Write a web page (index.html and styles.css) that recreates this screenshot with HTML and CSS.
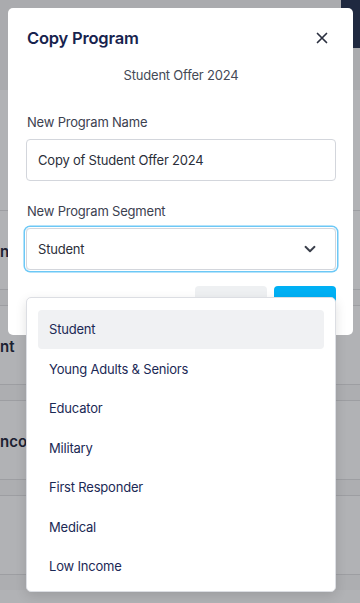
FILE: index.html
```html
<!DOCTYPE html>
<html lang="en">
<head>
    <meta charset="UTF-8">
    <meta name="viewport" content="width=device-width, initial-scale=1.0">
    <title>Copy Program</title>
    <link rel="stylesheet" href="styles.css">
</head>
<body>
    <!-- Dimmed page behind the modal -->
    <div class="page">
        <div class="page-top">
            <div class="page-top-accent"></div>
        </div>
        <div class="page-gap"></div>
        <div class="page-row"><span class="page-cell">n</span></div>
        <div class="page-band"></div>
        <div class="page-row"><span class="page-cell">nt</span></div>
        <div class="page-band"></div>
        <div class="page-row"><span class="page-cell">ncor</span></div>
        <div class="page-band"></div>
        <div class="page-row"></div>
        <div class="page-band"></div>
    </div>

    <!-- Modal -->
    <div class="modal">
        <div class="modal-header">
            <h2 class="modal-title">Copy Program</h2>
            <button class="modal-close" aria-label="Close">
                <svg width="12" height="12" viewBox="0 0 12 12" fill="none">
                    <path d="M1.5 1.5L10.5 10.5M10.5 1.5L1.5 10.5" stroke="#2b3040" stroke-width="1.7" stroke-linecap="round"/>
                </svg>
            </button>
        </div>
        <p class="modal-subtitle">Student Offer 2024</p>

        <label class="field-label">New Program Name</label>
        <div class="input">Copy of Student Offer 2024</div>

        <label class="field-label field-label-second">New Program Segment</label>
        <div class="select-wrap">
            <div class="select">
                <span>Student</span>
                <svg width="12" height="8" viewBox="0 0 12 8" fill="none">
                    <path d="M1.5 1.8L6 6.2L10.5 1.8" stroke="#3a3f4b" stroke-width="1.9" stroke-linecap="round" stroke-linejoin="round"/>
                </svg>
            </div>

            <ul class="dropdown">
                <li class="option active">Student</li>
                <li class="option">Young Adults &amp; Seniors</li>
                <li class="option">Educator</li>
                <li class="option">Military</li>
                <li class="option">First Responder</li>
                <li class="option">Medical</li>
                <li class="option">Low Income</li>
            </ul>
        </div>

        <div class="modal-actions">
            <button class="btn btn-cancel">Cancel</button>
            <button class="btn btn-save">Save</button>
        </div>
    </div>
</body>
</html>
```

FILE: styles.css
```css
/* Theme colors */
:root {
    --overlay: #b1b2b5;
    --overlay-dark: #aaabae;
    --overlay-line: #9d9ea2;
    --navy: #17234e;
    --text: #2b2f3a;
    --muted: #454a56;
    --border: #d3d6dc;
    --focus: #6cc8f6;
    --brand: #00b0f4;
}

* {
    margin: 0;
    padding: 0;
    box-sizing: border-box;
}

body {
    font-family: Inter, "Noto Sans", sans-serif;
    letter-spacing: -0.2px;
    background: var(--overlay);
    height: 603px;
    overflow: hidden;
    position: relative;
}

/* Background page (dimmed) */
.page {
    display: flex;
    flex-direction: column;
}

.page-top {
    height: 90px;
    background: var(--overlay-dark);
    display: flex;
    justify-content: flex-end;
}

.page-top-accent {
    width: 19px;
    height: 48px;
    background: #1f2940;
}

.page-gap {
    height: 120px;
}

.page-row {
    height: 79px;
    border-top: 1px solid var(--overlay-line);
    display: flex;
    align-items: center;
    padding-top: 2px;
}

.page-cell {
    font-size: 15px;
    font-weight: 600;
    color: #1c2132;
    white-space: nowrap;
    letter-spacing: 0;
}

.page-band {
    height: 16px;
    border-top: 1px solid var(--overlay-line);
    background: #adaeb1;
}

/* Modal */
.modal {
    position: absolute;
    top: 8px;
    left: 8px;
    width: 345px;
    height: 327px;
    background: #fff;
    border-radius: 5px;
    padding: 18px 17px 12px 18px;
}

.modal-header {
    display: flex;
    align-items: center;
    justify-content: space-between;
    height: 24px;
}

.modal-title {
    font-size: 16.5px;
    font-weight: 600;
    color: var(--navy);
    line-height: 24px;
    margin-left: 1px;
}

.modal-close {
    border: none;
    background: none;
    width: 20px;
    height: 20px;
    display: flex;
    align-items: center;
    justify-content: center;
    margin-right: 4px;
}

.modal-subtitle {
    margin-top: 15px;
    text-align: center;
    font-size: 13px;
    line-height: 20px;
    color: var(--muted);
}

.field-label {
    display: block;
    margin-top: 27px;
    font-size: 13px;
    line-height: 20px;
    color: #3c4150;
    margin-left: 1px;
}

.field-label-second {
    margin-top: 20px;
}

.input,
.select {
    margin-top: 7px;
    height: 42px;
    border: 1px solid var(--border);
    border-radius: 4px;
    padding: 0 11px;
    display: flex;
    align-items: center;
    font-size: 13px;
    color: var(--text);
}

.select-wrap {
    position: relative;
}

.select {
    justify-content: space-between;
    padding-right: 19px;
    box-shadow: 0 0 0 1px #fff, 0 0 0 2.5px var(--focus);
}

/* Dropdown list */
.dropdown {
    position: absolute;
    top: calc(100% + 27px);
    left: 0;
    right: 0;
    list-style: none;
    background: #fff;
    border: 1px solid #dcdee3;
    border-radius: 5px;
    padding: 11.5px 11px 5px;
    box-shadow: 0 4px 12px rgba(0, 0, 0, 0.12);
    z-index: 2;
}

.option {
    height: 39.5px;
    display: flex;
    align-items: center;
    padding-left: 11px;
    font-size: 13px;
    color: #1b2955;
    border-radius: 4px;
}

.option.active {
    background: #f0f1f3;
}

/* Actions */
.modal-actions {
    margin-top: 16px;
    display: flex;
    justify-content: flex-end;
    gap: 7px;
}

.btn {
    height: 36px;
    border: none;
    border-radius: 4px;
    font-family: inherit;
    font-size: 13px;
}

.btn-cancel {
    width: 72px;
    background: #eef0f2;
    color: #555a66;
}

.btn-save {
    width: 62px;
    background: var(--brand);
    color: #fff;
}
```
